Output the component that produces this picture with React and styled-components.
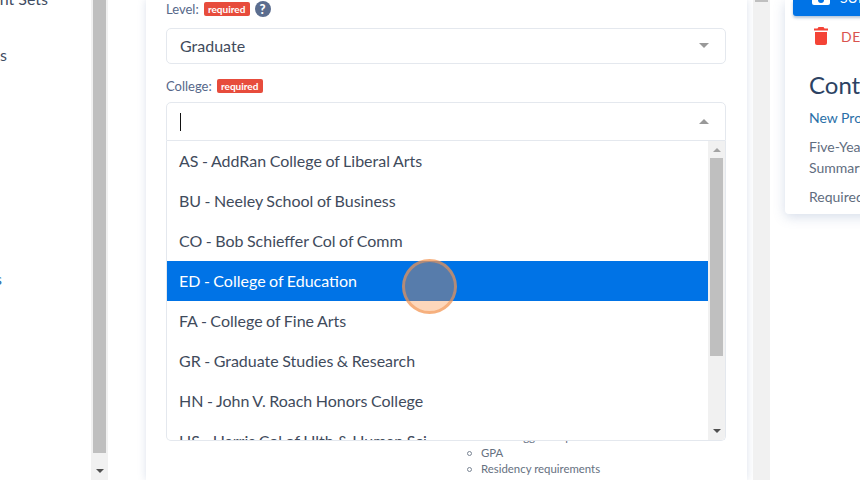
import React from "react";
import styled, { createGlobalStyle } from "styled-components";

const colleges = [
	"AS - AddRan College of Liberal Arts",
	"BU - Neeley School of Business",
	"CO - Bob Schieffer Col of Comm",
	"ED - College of Education",
	"FA - College of Fine Arts",
	"GR - Graduate Studies & Research",
	"HN - John V. Roach Honors College",
	"HS - Harris Col of Hlth & Human Sci",
];

function App() {
	return (
		<Page>
			<GlobalStyle />
			<Sidebar>
				<NavItem $top={-13} $clip={43}>
					Requirement Sets
				</NavItem>
				<NavItem $top={32} $clip={84}>
					Programs
				</NavItem>
				<NavItem $top={200} $clip={89} $link>
					Resources
				</NavItem>
			</Sidebar>
			<Scrollbar>
				<Thumb $height={453} />
				<Spacer />
				<ArrowDown />
			</Scrollbar>
			<Main>
				<Card>
					<Label>
						Level: <Badge>required</Badge>
						<Help>?</Help>
					</Label>
					<Select>
						<SelectValue>Graduate</SelectValue>
						<ArrowDownGrey />
					</Select>
					<Label $college>
						College: <Badge>required</Badge>
					</Label>
					<Combo>
						<OpenSelect>
							<Caret />
							<ArrowUpGrey />
						</OpenSelect>
						<Menu>
							<Options>
								{colleges.map((c, i) => (
									<Option key={c} $active={i === 3}>
										{c}
									</Option>
								))}
							</Options>
							<MenuScroll>
								<ArrowUpSmall />
								<MenuThumb />
								<Spacer />
								<ArrowDown />
							</MenuScroll>
						</Menu>
						<Notes>
							<li>Some suggested plan</li>
							<li>GPA</li>
							<li>Residency requirements</li>
						</Notes>
					</Combo>
				</Card>
			</Main>
			<Scrollbar>
				<Thumb $height={2} />
			</Scrollbar>
			<Aside>
				<AsideCard>
					<SubmitButton>
						<svg width="18" height="18" viewBox="0 0 18 18">
							<path
								d="M2 0h14a2 2 0 0 1 2 2v14a2 2 0 0 1-2 2H2a2 2 0 0 1-2-2V2a2 2 0 0 1 2-2z"
								fill="#fff"
							/>
							<circle cx="9" cy="13" r="3" fill="#0073e6" />
						</svg>
						<span>SUBMIT</span>
					</SubmitButton>
					<DeleteRow>
						<svg width="14" height="18" viewBox="0 0 14 18">
							<path d="M4.5 0h5l1 1.5H14v2H0v-2h3.5z" fill="#f44336" />
							<path
								d="M1 5h12v11a2 2 0 0 1-2 2H3a2 2 0 0 1-2-2z"
								fill="#f44336"
							/>
						</svg>
						DELETE
					</DeleteRow>
					<ContactBlock>
						<ContactTitle>Contact</ContactTitle>
						<AsideLink>New Program</AsideLink>
						<AsideText>
							Five-Year
							<br />
							Summary
						</AsideText>
						<AsideText $last>Required</AsideText>
					</ContactBlock>
				</AsideCard>
			</Aside>
			<Pointer />
		</Page>
	);
}

const GlobalStyle = createGlobalStyle`
	html, body {
		margin: 0;
		height: 100%;
		overflow: hidden;
		background: #fff;
		font-family: Lato, "Open Sans", sans-serif;
	}
`;

const Page = styled.div`
	display: flex;
	position: relative;
	width: 860px;
	height: 480px;
	overflow: hidden;
	background: #fff;
`;

const Sidebar = styled.nav`
	display: flex;
	flex-direction: column;
	align-items: flex-end;
	width: 91px;
	flex: none;
	overflow: hidden;
`;

const NavItem = styled.div`
	flex: none;
	margin-top: ${(p) => p.$top}px;
	margin-right: ${(p) => p.$clip}px;
	white-space: nowrap;
	font-size: 16px;
	line-height: 24px;
	color: ${(p) => (p.$link ? "#2a6fa8" : "#3f4d63")};
`;

const Scrollbar = styled.div`
	display: flex;
	flex-direction: column;
	align-items: center;
	flex: none;
	width: 17px;
	height: 480px;
	background: #f1f1f1;
`;

const Thumb = styled.div`
	width: 13px;
	height: ${(p) => p.$height}px;
	background: #bfbfbf;
`;

const Spacer = styled.div`
	flex: 1;
`;

const ArrowDown = styled.div`
	width: 0;
	height: 0;
	margin-bottom: 7px;
	border-left: 4px solid transparent;
	border-right: 4px solid transparent;
	border-top: 4px solid #505050;
`;

const ArrowUpSmall = styled.div`
	width: 0;
	height: 0;
	margin: 7px 0 6px;
	border-left: 4px solid transparent;
	border-right: 4px solid transparent;
	border-bottom: 4px solid #a3a3a3;
`;

const ArrowDownGrey = styled.div`
	width: 0;
	height: 0;
	border-left: 5px solid transparent;
	border-right: 5px solid transparent;
	border-top: 5px solid #999;
`;

const ArrowUpGrey = styled.div`
	width: 0;
	height: 0;
	border-left: 5px solid transparent;
	border-right: 5px solid transparent;
	border-bottom: 5px solid #999;
`;

const Main = styled.main`
	flex: none;
	width: 645px;
	height: 480px;
	padding-left: 38px;
	box-sizing: border-box;
	overflow: hidden;
`;

const Card = styled.section`
	width: 601px;
	height: 480px;
	box-sizing: border-box;
	padding: 0 21px 0 20px;
	background: #fff;
	box-shadow: 0 0 8px rgba(90, 120, 170, 0.22);
`;

const Label = styled.div`
	display: flex;
	align-items: center;
	gap: 5px;
	height: 18px;
	margin-top: ${(p) => (p.$college ? "13px" : "0")};
	font-size: 13px;
	line-height: 18px;
	color: #56688a;
`;

const Badge = styled.span`
	box-sizing: border-box;
	width: 46px;
	height: 14px;
	border-radius: 2px;
	background: #e74c3c;
	color: #fff;
	font-size: 10px;
	font-weight: 700;
	line-height: 14px;
	text-align: center;
`;

const Help = styled.span`
	width: 16px;
	height: 16px;
	border-radius: 50%;
	background: #5b6d8f;
	color: #fff;
	font-size: 13px;
	font-weight: 900;
	line-height: 16px;
	text-align: center;
`;

const Select = styled.div`
	display: flex;
	align-items: center;
	justify-content: space-between;
	box-sizing: border-box;
	height: 36px;
	margin-top: 10px;
	padding: 0 16px 2px 13px;
	border: 1px solid #e4e8ee;
	border-radius: 5px;
	background: #fff;
`;

const SelectValue = styled.span`
	font-size: 16px;
	color: #3f4b5c;
`;

const Combo = styled.div`
	position: relative;
	margin-top: 7px;
`;

const OpenSelect = styled.div`
	display: flex;
	align-items: center;
	justify-content: space-between;
	box-sizing: border-box;
	height: 39px;
	padding: 0 16px 0 13px;
	border: 1px solid #e4e8ee;
	border-radius: 5px 5px 0 0;
	background: #fff;
`;

const Caret = styled.span`
	width: 1px;
	height: 18px;
	background: #111;
`;

const Menu = styled.div`
	position: absolute;
	z-index: 2;
	top: 39px;
	left: 0;
	right: 0;
	display: flex;
	box-sizing: border-box;
	height: 300px;
	border: 1px solid #e4e8ee;
	border-top: 0;
	border-radius: 0 0 5px 5px;
	background: #fff;
	overflow: hidden;
`;

const Options = styled.div`
	flex: 1;
	height: 299px;
	overflow: hidden;
`;

const Option = styled.div`
	box-sizing: border-box;
	height: 40px;
	padding-left: 12px;
	font-size: 16px;
	word-spacing: -0.6px;
	line-height: 40px;
	white-space: nowrap;
	color: ${(p) => (p.$active ? "#fff" : "#3f4b5c")};
	background: ${(p) => (p.$active ? "#0073e6" : "transparent")};
`;

const MenuScroll = styled.div`
	display: flex;
	flex-direction: column;
	align-items: center;
	flex: none;
	width: 17px;
	height: 299px;
	background: #f1f1f1;
`;

const MenuThumb = styled.div`
	width: 13px;
	height: 198px;
	background: #bfbfbf;
`;

const Notes = styled.ul`
	margin: 288px 0 0 301px;
	padding: 0;
	list-style: none;
	font-size: 11.4px;
	line-height: 16px;
	color: #66717f;
	white-space: nowrap;

	& li {
		display: flex;
		align-items: center;
		gap: 9px;
	}

	& li::before {
		content: "";
		box-sizing: border-box;
		width: 5px;
		height: 5px;
		border: 1px solid #7a8594;
		border-radius: 50%;
	}
`;

const Aside = styled.aside`
	flex: 1;
	padding: 0 0 0 15px;
	min-width: 0;
`;

const AsideCard = styled.div`
	width: 300px;
	height: 214px;
	padding: 0 0 0 8px;
	box-sizing: border-box;
	border-radius: 0 0 0 4px;
	background: #fff;
	box-shadow: 0 3px 12px rgba(90, 120, 170, 0.25);
`;

const SubmitButton = styled.div`
	display: flex;
	align-items: flex-start;
	gap: 10px;
	box-sizing: border-box;
	width: 180px;
	height: 16px;
	padding: 0 0 0 19px;
	border-radius: 0 0 3px 3px;
	background: #0073e6;
	box-shadow: 0 2px 3px rgba(0, 60, 130, 0.3);
	color: #fff;
	font-size: 14px;
	line-height: 14px;
	overflow: hidden;

	& svg {
		flex: none;
		margin-top: -13px;
	}

	& span {
		margin-top: -9px;
	}
`;

const DeleteRow = styled.div`
	display: flex;
	align-items: center;
	gap: 13px;
	height: 20px;
	margin-top: 10px;
	padding-left: 21px;
	color: #d9534f;
	font-size: 14px;
	letter-spacing: 0.5px;
	white-space: nowrap;
`;

const ContactBlock = styled.div`
	padding-left: 16px;
`;

const ContactTitle = styled.div`
	margin-top: 25px;
	font-size: 24px;
	line-height: 28px;
	color: #2c4263;
`;

const AsideLink = styled.div`
	margin-top: 10px;
	font-size: 14px;
	line-height: 18px;
	color: #2a6fa8;
`;

const AsideText = styled.div`
	margin-top: ${(p) => (p.$last ? "8px" : "9px")};
	font-size: 14px;
	line-height: 21px;
	color: #5f6d80;
	white-space: nowrap;
`;

const Pointer = styled.div`
	position: absolute;
	z-index: 5;
	left: 402px;
	top: 259px;
	width: 55px;
	height: 55px;
	box-sizing: border-box;
	border: 3px solid rgba(240, 150, 85, 0.6);
	border-radius: 50%;
	background: rgba(250, 140, 60, 0.35);
`;

export default App;
